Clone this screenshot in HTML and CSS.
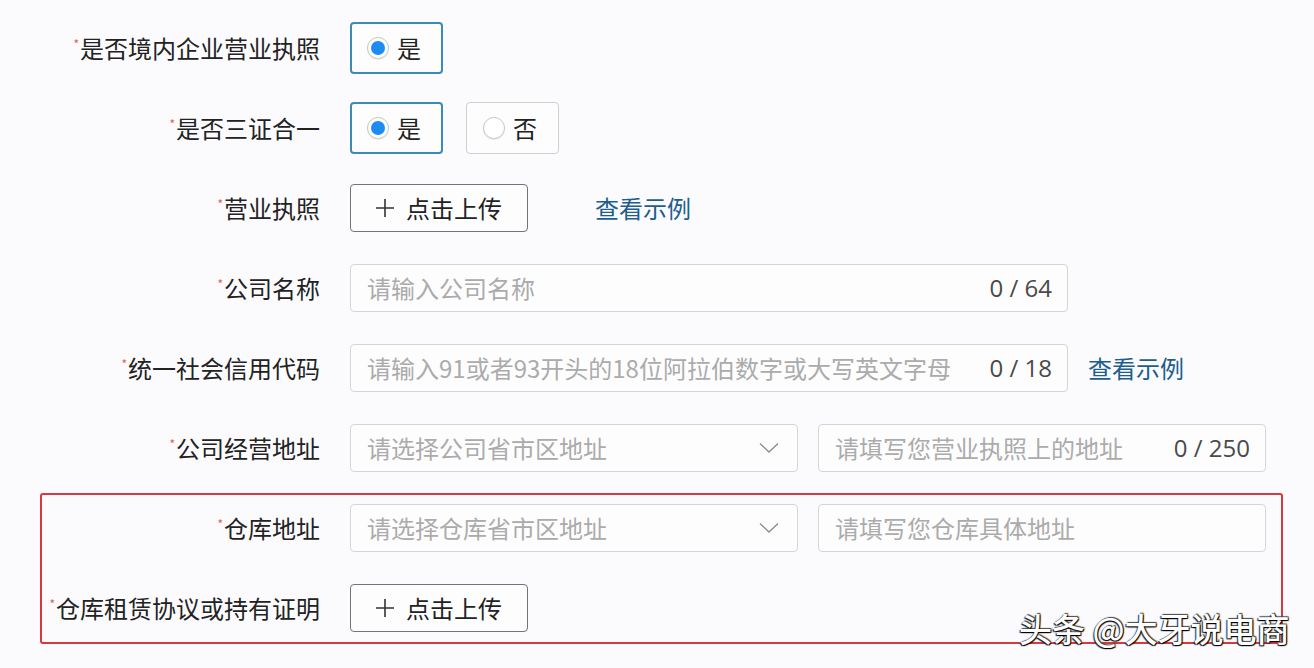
FILE: index.html
```html
<!DOCTYPE html>
<html lang="zh-CN">
<head>
    <meta charset="UTF-8">
    <meta name="viewport" content="width=device-width, initial-scale=1.0">
    <title>企业资质信息</title>
    <link rel="stylesheet" href="styles.css">
</head>
<body>
    <div class="form">
        <div class="row">
            <label class="label"><span class="req">*</span>是否境内企业营业执照</label>
            <div class="field">
                <div class="radio checked"><span class="dot"></span>是</div>
            </div>
        </div>
        <div class="row">
            <label class="label"><span class="req">*</span>是否三证合一</label>
            <div class="field radios">
                <div class="radio checked"><span class="dot"></span>是</div>
                <div class="radio"><span class="dot"></span>否</div>
            </div>
        </div>
        <div class="row">
            <label class="label"><span class="req">*</span>营业执照</label>
            <div class="field">
                <button class="upload"><svg class="plus" width="18" height="18" viewBox="0 0 18 18"><path d="M9 0 V18 M0 9 H18" stroke="#333" stroke-width="1.6"/></svg>点击上传</button>
                <a class="link link-far" href="#">查看示例</a>
            </div>
        </div>
        <div class="row">
            <label class="label"><span class="req">*</span>公司名称</label>
            <div class="field">
                <div class="input wide">
                    <span class="ph">请输入公司名称</span>
                    <span class="count">0 / 64</span>
                </div>
            </div>
        </div>
        <div class="row">
            <label class="label"><span class="req">*</span>统一社会信用代码</label>
            <div class="field">
                <div class="input wide">
                    <span class="ph">请输入91或者93开头的18位阿拉伯数字或大写英文字母</span>
                    <span class="count">0 / 18</span>
                </div>
                <a class="link" href="#">查看示例</a>
            </div>
        </div>
        <div class="row">
            <label class="label"><span class="req">*</span>公司经营地址</label>
            <div class="field">
                <div class="input half">
                    <span class="ph">请选择公司省市区地址</span>
                    <svg class="chev" width="20" height="12" viewBox="0 0 20 12"><path d="M1 1.5 L10 10 L19 1.5" fill="none" stroke="#8a8a8a" stroke-width="1.3"/></svg>
                </div>
                <div class="input half">
                    <span class="ph">请填写您营业执照上的地址</span>
                    <span class="count">0 / 250</span>
                </div>
            </div>
        </div>
        <div class="highlight">
            <div class="row">
                <label class="label"><span class="req">*</span>仓库地址</label>
                <div class="field">
                    <div class="input half">
                        <span class="ph">请选择仓库省市区地址</span>
                        <svg class="chev" width="20" height="12" viewBox="0 0 20 12"><path d="M1 1.5 L10 10 L19 1.5" fill="none" stroke="#8a8a8a" stroke-width="1.3"/></svg>
                    </div>
                    <div class="input half">
                        <span class="ph">请填写您仓库具体地址</span>
                    </div>
                </div>
            </div>
            <div class="row">
                <label class="label"><span class="req">*</span>仓库租赁协议或持有证明</label>
                <div class="field">
                    <button class="upload"><svg class="plus" width="18" height="18" viewBox="0 0 18 18"><path d="M9 0 V18 M0 9 H18" stroke="#333" stroke-width="1.6"/></svg>点击上传</button>
                </div>
            </div>
        </div>
    </div>
    <div class="watermark">头条 @大牙说电商</div>
</body>
</html>
```

FILE: styles.css
```css
body {
    margin: 0;
    background: #fbfbfd;
    font-family: "Noto Sans CJK SC", "Noto Sans", sans-serif;
    color: #222;
    font-size: 24px;
    position: relative;
    height: 668px;
    overflow: hidden;
}
.form {
    display: flex;
    flex-direction: column;
    gap: 32px;
    padding-top: 24px;
}
.row {
    display: flex;
    align-items: center;
    height: 48px;
}
.label {
    width: 320px;
    text-align: right;
    flex-shrink: 0;
    white-space: nowrap;
    line-height: 1;
}
.req {
    color: #d4625f;
    font-size: 12px;
    vertical-align: top;
    position: relative;
    top: 2px;
    margin-right: 1px;
}
.field {
    display: flex;
    align-items: center;
    margin-left: 30px;
    gap: 20px;
}
.radios {
    gap: 23px;
}
.radio {
    box-sizing: border-box;
    width: 93px;
    height: 52px;
    border: 1px solid #cfcfcf;
    border-radius: 4px;
    display: flex;
    align-items: center;
    padding-left: 16px;
    background: #fdfdfe;
    line-height: 1;
}
.radio.checked {
    border: 2px solid #3a8bb6;
    padding-left: 15px;
}
.dot {
    box-sizing: border-box;
    width: 22px;
    height: 22px;
    border-radius: 50%;
    border: 1px solid #c8c8c8;
    background: #fff;
    margin-right: 8px;
    box-shadow: 0 1px 1px rgba(0, 0, 0, 0.08);
    display: flex;
    align-items: center;
    justify-content: center;
}
.checked .dot::after {
    content: "";
    width: 14px;
    height: 14px;
    border-radius: 50%;
    background: #1b8cf2;
}
.upload {
    box-sizing: border-box;
    width: 178px;
    height: 48px;
    border: 1px solid #747474;
    border-radius: 4px;
    background: #fdfdfe;
    font: inherit;
    color: #222;
    display: flex;
    align-items: center;
    padding: 0 0 0 25px;
    line-height: 1;
    cursor: pointer;
}
.plus {
    margin-right: 12px;
}
.link {
    color: #1d5e8e;
    text-decoration: none;
    line-height: 1;
}
.link-far {
    margin-left: 47px;
}
.input {
    box-sizing: border-box;
    height: 48px;
    border: 1px solid #d6d6d8;
    border-radius: 4px;
    background: #fdfdfe;
    display: flex;
    align-items: center;
    justify-content: space-between;
    padding: 0 15px 0 16px;
    line-height: 1;
}
.wide {
    width: 718px;
}
.half {
    width: 448px;
}
.ph {
    color: #ababab;
    white-space: nowrap;
}
.count {
    color: #4a4a4a;
    font-family: "Open Sans", sans-serif;
    font-size: 24px;
    white-space: nowrap;
}
.chev {
    margin-right: 3px;
}
.highlight {
    display: flex;
    flex-direction: column;
    gap: 32px;
    margin: -11px 31px 0 40px;
    padding: 9px 0 10px;
    border: 2px solid #d63a3e;
    border-radius: 3px;
}
.highlight .row {
    margin-left: -42px;
}
.watermark {
    position: absolute;
    left: 1019px;
    top: 609px;
    font-size: 33px;
    font-weight: 500;
    color: #fff;
    line-height: 1.2;
    white-space: nowrap;
    text-shadow: 1px 1px 1px #000, -1px 1px 1px #222, 1px -1px 1px #444;
}
```
